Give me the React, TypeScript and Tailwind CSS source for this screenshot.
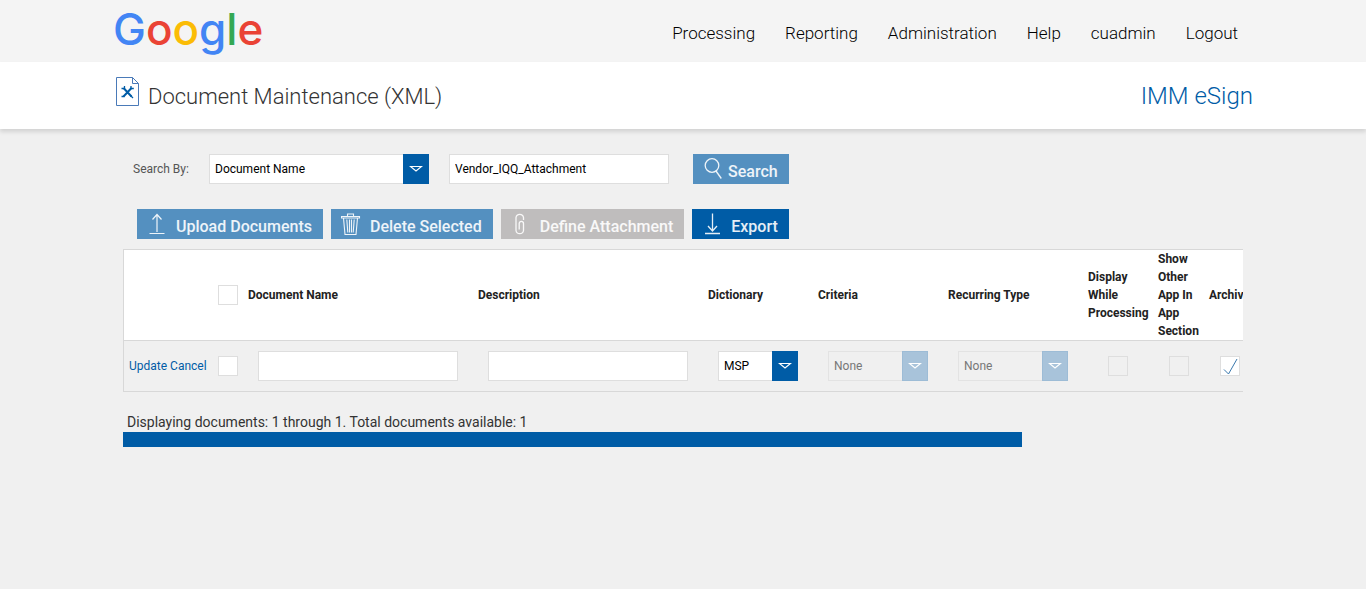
import type { ReactNode } from "react";

const navLinks = ["Processing", "Reporting", "Administration", "Help", "cuadmin", "Logout"];

const UploadIcon = () => (
  <svg width="20" height="24" viewBox="0 0 20 24" fill="none" stroke="currentColor" strokeWidth="1.2">
    <path d="M10 20V3M5.5 7.5L10 2.5L14.5 7.5M2.5 21.5H17.5" />
  </svg>
);

const DownloadIcon = () => (
  <svg width="20" height="24" viewBox="0 0 20 24" fill="none" stroke="currentColor" strokeWidth="1.3">
    <path d="M10.5 1.5V19M6 14L10.5 19L15 14M3 21.5H18" />
  </svg>
);

const TrashIcon = () => (
  <svg width="20" height="24" viewBox="0 0 20 24" fill="none" stroke="currentColor" strokeWidth="1.1">
    <path d="M0.5 4.5H18.5V6H0.5ZM6.5 4.5V2H12.5V4.5M2.5 6L4 22.5H15L16.5 6" />
    <path d="M5.8 7.5L6.8 20.5M8.5 7.5V20.5M10.5 7.5V20.5M13.2 7.5L12.2 20.5" />
  </svg>
);

const ClipIcon = () => (
  <svg width="20" height="24" viewBox="0 0 20 24" fill="none" stroke="currentColor" strokeWidth="1.3">
    <path d="M12.5 8V5.5A3.8 3.8 0 0 0 5 5.5V18.5A3.8 3.8 0 0 0 12.5 18.5V11.5A2 2 0 0 0 8.2 11.5V17.5" />
  </svg>
);

const SearchIcon = () => (
  <svg width="20" height="24" viewBox="0 0 20 24" fill="none" stroke="currentColor" strokeWidth="1.3">
    <circle cx="9" cy="8.5" r="6.8" />
    <path d="M13 14L18.3 21.5" />
  </svg>
);

const DocumentIcon = () => (
  <svg width="24" height="30" viewBox="0 0 24 30" fill="none" stroke="#4a7ab8">
    <path d="M16.5 0.5H0.5V28.5H22.5V6.5L16.5 0.5V6.5H22.5" strokeWidth="1" />
    <path d="M7.5 11L15.5 19.5M15.5 11L7.5 19.5" stroke="#005ca6" strokeWidth="2" />
    <path d="M5.5 11.5H8.5V9M15 9V11.5H17.8M5.5 19.5H8.5M14.5 18.5L17 21" stroke="#005ca6" strokeWidth="1.3" />
  </svg>
);

type DropDownProps = {
  label: string;
  value: string;
  width: string;
  disabled?: boolean;
};

const DropDown = ({ label, value, width, disabled }: DropDownProps) => (
  <div className={`relative h-[30px] ${width}`}>
    <select
      aria-label={label}
      disabled={disabled}
      className="h-full w-full appearance-none border border-[#dedede] bg-white pl-[5px] text-xs text-black disabled:border-[#e3e3e3] disabled:bg-[#f0f0f0] disabled:text-[#777] disabled:opacity-100"
    >
      <option>{value}</option>
    </select>
    <span
      className={`pointer-events-none absolute inset-y-0 right-0 flex w-[26px] items-center justify-center ${
        disabled ? "border border-[#9dbcd6] bg-[#a8c3da]" : "bg-[#005ca6]"
      }`}
    >
      <svg width="14" height="8" viewBox="0 0 14 8" fill="none" stroke="#fff" strokeWidth="1.1">
        <path d="M1.5 1.5H12.5L7 6Z" />
      </svg>
    </span>
  </div>
);

type ToolButtonProps = {
  icon: ReactNode;
  color: string;
  gap?: string;
  disabled?: boolean;
  children: ReactNode;
};

const ToolButton = ({ icon, color, gap = "gap-[9px]", disabled, children }: ToolButtonProps) => (
  <button
    type="button"
    disabled={disabled}
    className={`flex h-[30px] items-center pr-[11px] pl-[10px] text-base font-medium whitespace-nowrap text-white/90 ${gap} ${color}`}
  >
    {icon}
    <span className="pt-[6px]">{children}</span>
  </button>
);

type CheckProps = {
  label: string;
  checked?: boolean;
  disabled?: boolean;
};

const Check = ({ label, checked, disabled }: CheckProps) => (
  <span className="relative block size-5">
    <input
      type="checkbox"
      aria-label={label}
      defaultChecked={checked}
      disabled={disabled}
      className="peer block size-5 appearance-none border border-[#dedede] bg-white disabled:bg-[#f0f0f0]"
    />
    <svg
      className="pointer-events-none absolute inset-0 hidden peer-checked:block"
      width="20"
      height="20"
      viewBox="0 0 20 20"
      fill="none"
      stroke="#3a78ad"
      strokeWidth="1"
    >
      <path d="M4 13.5L8.5 18L17 3" />
    </svg>
  </span>
);

const Header = () => (
  <header className="bg-[#f4f4f4]">
    <div className="mx-auto flex h-[62px] max-w-[1140px] items-center justify-between">
      <a href="#" className="pb-1 font-[Inter] text-[44px] leading-none font-medium">
        <span className="text-[#4285f4]">G</span>
        <span className="text-[#ea4335]">o</span>
        <span className="text-[#fbbc05]">o</span>
        <span className="text-[#4285f4]">g</span>
        <span className="text-[#34a853]">l</span>
        <span className="text-[#ea4335]">e</span>
      </a>
      <nav className="flex gap-[30px] pt-[6px] pr-[15px] text-[17px] font-light text-black">
        {navLinks.map((link) => (
          <a key={link} href="#">
            {link}
          </a>
        ))}
      </nav>
    </div>
  </header>
);

const TitleBar = () => (
  <div className="bg-white shadow-[0_3px_4px_rgba(0,0,0,0.12)]">
    <div className="mx-auto flex h-[67px] max-w-[1140px] items-center justify-between font-light">
      <div className="flex items-center gap-2 pl-[3px]">
        <div className="pb-2">
          <DocumentIcon />
        </div>
        <h1 className="pt-[2px] text-[22px] text-[#333]">Document Maintenance (XML)</h1>
      </div>
      <div className="text-2xl text-[#005ca6]">IMM eSign</div>
    </div>
  </div>
);

const DocumentTable = () => (
  <div className="mt-[10px] overflow-hidden">
    <table className="w-[1395px] table-fixed border-separate border-spacing-0 border border-[#d8d8d8] text-left text-xs leading-[18px]">
      <colgroup>
        <col className="w-[89px]" />
        <col className="w-[30px]" />
        <col className="w-[230px]" />
        <col className="w-[230px]" />
        <col className="w-[110px]" />
        <col className="w-[130px]" />
        <col className="w-[140px]" />
        <col className="w-[70px]" />
        <col className="w-[51px]" />
        <col className="w-[52px]" />
        <col />
      </colgroup>
      <thead className="bg-white text-[#222]">
        <tr className="[&>th]:border-b [&>th]:border-[#d8d8d8] [&>th]:px-[5px] [&>th]:py-0 [&>th]:font-bold">
          <th />
          <th>
            <Check label="Select all" />
          </th>
          <th>Document Name</th>
          <th>Description</th>
          <th>Dictionary</th>
          <th>Criteria</th>
          <th>Recurring Type</th>
          <th>Display While Processing</th>
          <th>Show Other App In App Section</th>
          <th>Archive</th>
          <th />
        </tr>
      </thead>
      <tbody>
        <tr className="h-[50px] [&>td]:px-[5px] [&>td]:py-0">
          <td className="whitespace-nowrap text-[#005ca6]">
            <a href="#">Update</a> <a href="#">Cancel</a>
          </td>
          <td>
            <Check label="Select document" />
          </td>
          <td>
            <input
              type="text"
              aria-label="Document Name"
              className="mx-[10px] block h-[30px] w-[200px] border border-[#dedede] bg-white px-[5px]"
            />
          </td>
          <td>
            <input
              type="text"
              aria-label="Description"
              className="mx-[10px] block h-[30px] w-[200px] border border-[#dedede] bg-white px-[5px]"
            />
          </td>
          <td>
            <div className="px-[10px]">
              <DropDown label="Dictionary" value="MSP" width="w-full" />
            </div>
          </td>
          <td>
            <div className="px-[10px]">
              <DropDown label="Criteria" value="None" width="w-full" disabled />
            </div>
          </td>
          <td>
            <div className="px-[10px]">
              <DropDown label="Recurring Type" value="None" width="w-full" disabled />
            </div>
          </td>
          <td>
            <div className="flex justify-center">
              <Check label="Display While Processing" disabled />
            </div>
          </td>
          <td>
            <div className="flex justify-center">
              <Check label="Show Other App In App Section" disabled />
            </div>
          </td>
          <td>
            <div className="flex justify-center">
              <Check label="Archive" checked />
            </div>
          </td>
          <td />
        </tr>
      </tbody>
    </table>
  </div>
);

const App = () => {
  return (
    <div className="min-h-screen bg-[#f0f0f0] font-[Roboto,sans-serif] text-[#333]">
      <Header />
      <TitleBar />
      <main className="mx-auto max-w-[1140px] px-[10px] pt-[25px]">
        <form className="flex items-center pl-[10px] text-xs">
          <label htmlFor="search-text" className="w-[76px] text-[#555]">
            Search By:
          </label>
          <DropDown label="Search By" value="Document Name" width="w-[220px]" />
          <input
            id="search-text"
            type="text"
            defaultValue="Vendor_IQQ_Attachment"
            className="mr-6 ml-5 h-[30px] w-[220px] border border-[#dedede] bg-white px-[5px] text-black"
          />
          <ToolButton icon={<SearchIcon />} color="bg-[#5490c0]" gap="gap-[5px]">
            Search
          </ToolButton>
        </form>
        <div className="mt-[25px] flex gap-2 pl-[14px]">
          <ToolButton icon={<UploadIcon />} color="bg-[#5490c0]">
            Upload Documents
          </ToolButton>
          <ToolButton icon={<TrashIcon />} color="bg-[#5490c0]">
            Delete Selected
          </ToolButton>
          <ToolButton icon={<ClipIcon />} color="bg-[#bfbdbd]" disabled>
            Define Attachment
          </ToolButton>
          <ToolButton icon={<DownloadIcon />} color="bg-[#005ca6]">
            Export
          </ToolButton>
        </div>
        <DocumentTable />
        <p className="mt-5 pl-1 text-sm">Displaying documents: 1 through 1. Total documents available: 1</p>
        <div className="h-[15px] w-[899px] max-w-full bg-[#005ca6]" />
      </main>
    </div>
  );
};

export default App;
